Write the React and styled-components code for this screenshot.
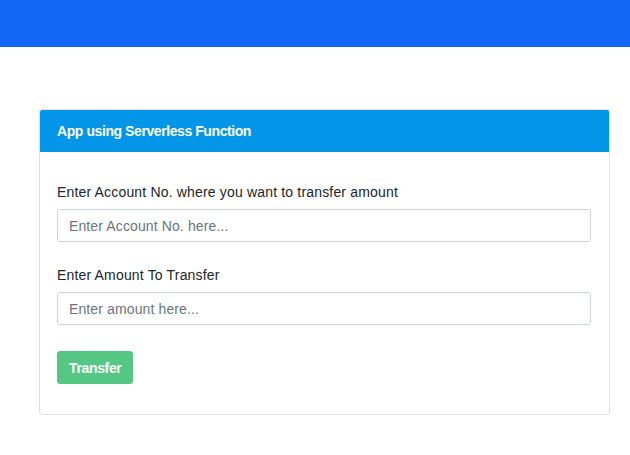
import React from "react";
import styled, { createGlobalStyle } from "styled-components";

const Global = createGlobalStyle`
  html, body { margin: 0; padding: 0; background: #fff; }
  body { font-family: "Liberation Sans", Arial, sans-serif; color: #212529; }
  * { box-sizing: border-box; }
`;

const Navbar = styled.div`
  height: 47px;
  background: #1467f4;
`;

const Main = styled.main`
  padding: 62px 21px 0 39px;
`;

const Card = styled.section`
  width: 571px;
  border: 1px solid #dfe1e4;
  border-radius: 3px;
  overflow: hidden;
`;

const CardHeader = styled.header`
  height: 42px;
  background: #0396e8;
  color: #fff;
  font-weight: bold;
  font-size: 14px;
  letter-spacing: -0.42px;
  display: flex;
  align-items: center;
  padding: 0 17px;
`;

const CardBody = styled.div`
  padding: 32px 17px 30px 17px;
  display: flex;
  flex-direction: column;
`;

const Field = styled.div`
  display: flex;
  flex-direction: column;
  margin-bottom: 25px;
`;

const Label = styled.label`
  font-size: 14px;
  line-height: 17px;
  letter-spacing: 0.17px;
  color: #212529;
  margin-bottom: 8px;
`;

const Input = styled.input`
  height: 33px;
  width: 534px;
  border: 1px solid #ced4da;
  border-radius: 3px;
  padding: 0 11px;
  font-family: inherit;
  font-size: 14px;
  letter-spacing: 0.12px;
  color: #495057;
  &::placeholder { color: #6c757d; }
`;

const Button = styled.button`
  align-self: flex-start;
  margin-top: 1px;
  height: 33px;
  padding: 0 11px;
  background: #54c785;
  border: 1px solid #54c785;
  border-radius: 3px;
  color: #fff;
  font-family: inherit;
  font-weight: bold;
  font-size: 14px;
  letter-spacing: -0.35px;
`;

export default function App() {
  return (
    <>
      <Global />
      <Navbar />
      <Main>
        <Card>
          <CardHeader>App using Serverless Function</CardHeader>
          <CardBody>
            <Field>
              <Label>Enter Account No. where you want to transfer amount</Label>
              <Input placeholder="Enter Account No. here..." />
            </Field>
            <Field>
              <Label>Enter Amount To Transfer</Label>
              <Input placeholder="Enter amount here..." />
            </Field>
            <Button>Transfer</Button>
          </CardBody>
        </Card>
      </Main>
    </>
  );
}
